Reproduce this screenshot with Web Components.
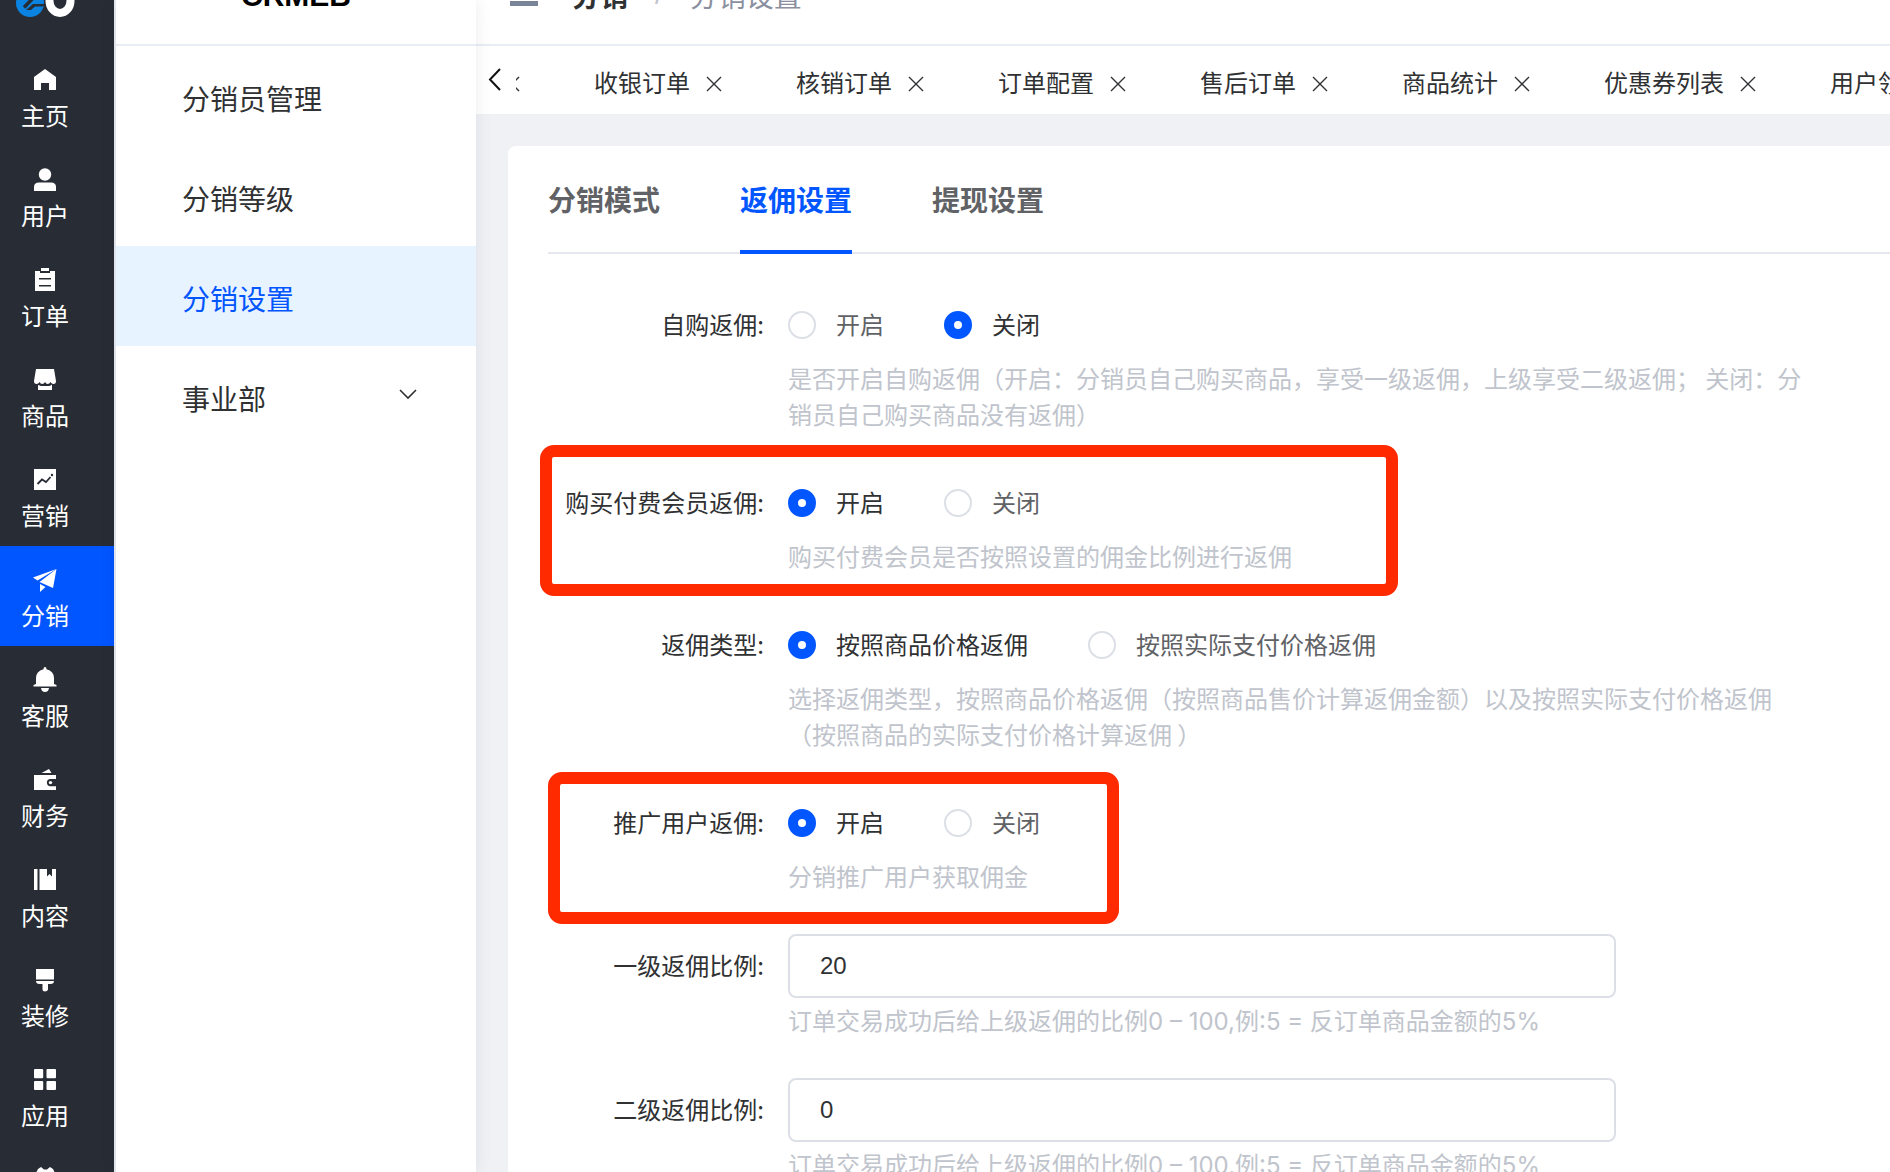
<!DOCTYPE html>
<html lang="zh-CN">
<head>
<meta charset="utf-8">
<title>分销设置</title>
<style>
  html, body { margin: 0; height: 100%; }
  body {
    overflow: hidden;
    font-family: "Noto Sans CJK SC", "Noto Sans", sans-serif;
    font-size: 24px;
    color: #303133;
    --blue: #0256ff;
    --line: #e8edf4;
    --hint: #c0c4cc;
  }
</style>
</head>
<body>
<crm-app></crm-app>

<script>
const define = (name, html, setup) => {
  const template = document.createElement('template');
  template.innerHTML = html;
  customElements.define(name, class extends HTMLElement {
    connectedCallback() {
      if (this.shadowRoot) return;
      const root = this.attachShadow({ mode: 'open' });
      root.append(template.content.cloneNode(true));
      if (setup) setup(this, root);
    }
  });
};

const ICONS = {
  home: '<path d="M12 2L23 10V23H16V16H8V23H1V10Z"/>',
  user: '<circle cx="12" cy="7.5" r="6.2"/><path d="M1 24V20Q1 15.500 6 15.500H18Q23 15.500 23 20V24Z"/>',
  order: '<path d="M8 1H16V4H8Z"/><path fill-rule="evenodd" d="M2 4H7V6H17V4H22V24H2ZM6 11V12.500H18V11ZM6 18V19.500H18V18Z"/>',
  goods: '<path d="M3 2H21L23 14Q23 17 20.500 17Q18.500 17 17.500 15Q16.500 17 14.700 17Q13 17 12 15Q11 17 9.300 17Q7.500 17 6.500 15Q5.500 17 3.500 17Q1 17 1 14Z"/><path d="M5 18Q7 18.500 8 19H16Q18 18.500 19 17.500V23H5Z"/>',
  market: '<path d="M1 2H23V23H1Z"/><path d="M4.500 17L9 12.500L13 15L17.500 10" fill="none" stroke="#282c34" stroke-width="1.800"/><circle cx="19" cy="8" r="1.200" fill="#282c34"/>',
  plane: '<path d="M23.500 2L0 10.500L4.500 13.500Z"/><path d="M23.500 2L6.500 15L20 21Z"/><path d="M7 17L12.500 20L7 25Z"/>',
  bell: '<path d="M12 0Q13.500 0 13.500 2.300Q21 4.500 21 11V17L23.500 18V19.500H.5V18L3 17V11Q3 4.500 10.500 2.300Q10.500 0 12 0Z"/><path d="M8 21H16Q15.500 25 12 25Q8.500 25 8 21Z"/>',
  wallet: '<path d="M8.500 6L16 2L18.500 6Z"/><path d="M1 8H23V12H17.500A3.600 3.600 0 0 0 17.500 19.200H23V23H1Z"/><circle cx="17.500" cy="15.600" r="1.700"/>',
  book: '<path d="M1 2H4.500V23H1Z"/><path d="M6.500 2H14V9.500L16.500 7L19 9.500V2H23V23H6.500Z"/>',
  brush: '<path d="M3 2H21V12.500H3Z"/><path d="M3 14H21Q21 17 17.500 17H15V22.500Q14.500 24.500 12 24.500Q9.500 24.500 9.500 22.500V17H6.500Q3 17 3 14Z"/>',
  apps: '<rect x="1" y="2" width="9.200" height="9.200" rx="1"/><rect x="13.500" y="2" width="9.500" height="9.200" rx="1"/><rect x="1" y="14" width="9.200" height="9" rx="1"/><rect x="13.500" y="14" width="9.500" height="9" rx="1"/>',
  gear: '<path d="M4 4L5 2L8 0L11 2.500H14L17 0L20 2L21 4L23 9V16L19 20V23H5V20L1 16V9Z"/>'
};

const CLOSE = '<svg width="16" height="16" viewBox="0 0 16 16" fill="none" stroke="#303133" stroke-width="1.400"><path d="M1 1L15 15M15 1L1 15"/></svg>';

define('rail-item', `
  <style>
    :host { display: block; }
    a {
      display: flex; flex-direction: column; align-items: center; gap: 8px;
      height: 100px; padding: 21px 24px 0 0; box-sizing: border-box;
      color: #fff; line-height: 32px; text-decoration: none;
    }
    :host([active]) a { background: var(--blue); }
    svg { flex: none; display: block; overflow: visible; fill: #fff; }
  </style>
  <a href="#"><svg width="24" height="24" viewBox="0 0 24 24"></svg><slot></slot></a>`,
  (el, root) => {
    root.querySelector('svg').innerHTML = ICONS[el.getAttribute('icon')];
    if (!el.textContent) root.querySelector('a').setAttribute('aria-label', '设置');
  });

define('nav-rail', `
  <style>
    :host { display: block; flex: none; width: 114px; background: #282c34; border-right: 2px solid var(--line); overflow: hidden; }
    .logo { display: flex; align-items: flex-end; height: 46px; overflow: hidden; }
    .logo svg { display: block; flex: none; }
  </style>
  <div class="logo">
    <svg width="90" height="100" viewBox="0 -54 90 100" fill="none">
      <ellipse cx="60" cy="1" rx="10.500" ry="12" stroke="#fff" stroke-width="8"/>
      <circle cx="30" cy="3" r="14" fill="#0a84e0"/>
      <path d="M24 7.500L36-5" stroke="#282c34" stroke-width="3.500"/>
      <path d="M26 10L33 4H46V5.500L42 6.500H35L31 10Z" fill="#282c34"/>
    </svg>
  </div>
  <nav>
    <rail-item icon="home">主页</rail-item>
    <rail-item icon="user">用户</rail-item>
    <rail-item icon="order">订单</rail-item>
    <rail-item icon="goods">商品</rail-item>
    <rail-item icon="market">营销</rail-item>
    <rail-item icon="plane" active>分销</rail-item>
    <rail-item icon="bell">客服</rail-item>
    <rail-item icon="wallet">财务</rail-item>
    <rail-item icon="book">内容</rail-item>
    <rail-item icon="brush">装修</rail-item>
    <rail-item icon="apps">应用</rail-item>
    <rail-item icon="gear"></rail-item>
  </nav>`);

define('menu-link', `
  <style>
    :host { display: block; }
    a {
      display: flex; align-items: center; justify-content: space-between;
      height: 100px; padding: 4px 58px 0 66px; box-sizing: border-box;
      font-size: 28px; color: #303133; text-decoration: none;
    }
    :host([active]) a { background: #e7f3ff; color: var(--blue); }
    svg { display: none; }
    :host([expandable]) svg { display: block; }
  </style>
  <a href="#"><slot></slot>
    <svg width="20" height="20" viewBox="0 0 20 20" fill="none" stroke="#303133" stroke-width="1.600"><path d="M2 2L10 10L18 2"/></svg>
  </a>`);

define('side-menu', `
  <style>
    :host { display: block; flex: none; width: 360px; background: #fff; position: relative; z-index: 1; box-shadow: 0 0 16px rgba(0, 21, 41, .08); }
    header { height: 46px; box-sizing: border-box; border-bottom: 2px solid var(--line); display: flex; align-items: flex-end; overflow: hidden; }
    strong { flex: 1; height: 96px; line-height: 96px; text-align: center; font-family: "Liberation Sans", sans-serif; font-size: 30px; color: #000; }
  </style>
  <header><strong>CRMEB</strong></header>
  <nav>
    <menu-link>分销员管理</menu-link>
    <menu-link>分销等级</menu-link>
    <menu-link active>分销设置</menu-link>
    <menu-link expandable>事业部</menu-link>
  </nav>`);

define('top-bar', `
  <style>
    :host { display: flex; align-items: flex-end; height: 46px; box-sizing: border-box; border-bottom: 2px solid var(--line); background: #fff; overflow: hidden; }
    .inner { display: flex; align-items: center; height: 98px; padding-left: 34px; gap: 34px; }
    button { border: 0; padding: 0; background: none; display: flex; }
    .crumbs { display: flex; gap: 27px; font-size: 28px; line-height: 98px; color: #8a90a0; }
    b { color: #303133; }
    i { font-family: "Liberation Sans", sans-serif; font-style: normal; color: #c0c4cc; }
  </style>
  <div class="inner">
    <button aria-label="菜单"><svg width="28" height="22" viewBox="0 0 28 22" fill="#7a8499"><path d="M0 0H28V4H0ZM0 9H28V13H0ZM0 17H28V22H0Z"/></svg></button>
    <div class="crumbs"><b>分销</b><i>/</i><span>分销设置</span></div>
  </div>`);

define('page-tab', `
  <style>
    :host { display: flex; align-items: center; gap: 16px; flex: none; padding-right: 74px; }
    a { color: #303133; text-decoration: none; white-space: nowrap; }
    :host(:empty) a { display: none; }
    button { border: 0; padding: 4px 0 0; background: none; display: flex; }
  </style>
  <a href="#"><slot></slot></a><button aria-label="关闭标签">${CLOSE}</button>`);

define('tab-strip', `
  <style>
    :host { display: flex; align-items: center; height: 68px; padding: 3px 0 0 12px; box-sizing: border-box; background: #fff; overflow: hidden; }
    .prev { flex: none; width: 28px; border: 0; padding: 0; background: none; display: flex; }
    .view { flex: 1; min-width: 0; overflow: hidden; display: flex; }
    .track { display: flex; margin-left: -12px; }
  </style>
  <button class="prev" aria-label="上一页"><svg width="14" height="30" viewBox="0 0 14 30" fill="none" stroke="#111" stroke-width="2"><path d="M12 2L2 12.500L12 23"/></svg></button>
  <div class="view"><div class="track">
    <page-tab></page-tab><page-tab>收银订单</page-tab><page-tab>核销订单</page-tab><page-tab>订单配置</page-tab><page-tab>售后订单</page-tab><page-tab>商品统计</page-tab><page-tab>优惠券列表</page-tab><page-tab>用户领</page-tab>
  </div></div>`);

define('card-tabs', `
  <style>
    :host { display: flex; gap: 80px; height: 108px; box-sizing: border-box; border-bottom: 2px solid #e4e7ed; }
    a { height: 108px; line-height: 106px; box-sizing: border-box; border-bottom: 4px solid transparent; font-size: 28px; font-weight: 700; color: #606266; text-decoration: none; }
    a.on { color: var(--blue); border-color: var(--blue); }
  </style>
  <a href="#">分销模式</a><a href="#" class="on">返佣设置</a><a href="#">提现设置</a>`);

define('radio-row', `
  <style>
    :host { display: flex; gap: 24px; position: relative; padding-bottom: 39px; }
    .name { flex: none; width: 216px; line-height: 62px; text-align: right; white-space: nowrap; }
    .body { flex: 1; max-width: 1024px; }
    .choices { display: flex; gap: 60px; height: 64px; }
    .choices label { display: flex; gap: 20px; line-height: 62px; color: #606266; }
    .choices label:has(:checked) { color: #303133; }
    input { appearance: none; margin: 18px 0 0; width: 28px; height: 28px; box-sizing: border-box; border: 2px solid #dcdfe6; border-radius: 50%; background: #fff; }
    input:checked { border: 10px solid var(--blue); }
    p { margin: 3px 0 0; line-height: 36px; color: var(--hint); }
    .frame { display: none; }
    :host([framed]) .frame {
      display: block; position: absolute; pointer-events: none; box-sizing: border-box;
      left: var(--frame-left); top: var(--frame-top); width: var(--frame-width); height: var(--frame-height);
      border: 12px solid #ff2a00; border-radius: 14px;
    }
  </style>
  <div class="name" id="name"></div>
  <div class="body">
    <div class="choices" role="radiogroup" aria-labelledby="name"></div>
    <p><slot></slot></p>
  </div>
  <div class="frame"></div>`,
  (el, root) => {
    root.querySelector('.name').textContent = el.getAttribute('label') + ':';
    const chosen = el.getAttribute('value');
    for (const text of el.getAttribute('options').split('|')) {
      const label = document.createElement('label');
      const input = document.createElement('input');
      input.type = 'radio';
      input.name = 'choice';
      input.checked = text === chosen;
      label.append(input, text);
      root.querySelector('.choices').append(label);
    }
  });

define('input-row', `
  <style>
    :host { display: flex; gap: 24px; padding-bottom: 38px; }
    label { flex: none; width: 216px; line-height: 62px; text-align: right; white-space: nowrap; }
    .body { flex: 1; max-width: 828px; }
    input {
      display: block; width: 100%; height: 64px; box-sizing: border-box; padding: 0 30px;
      border: 2px solid #dcdfe6; border-radius: 8px; background: #fff;
      font: 24px "Liberation Sans", sans-serif; color: #303133; outline: 0;
    }
    p { margin: 6px 0 0; line-height: 36px; color: var(--hint); font-family: Inter, "Noto Sans CJK SC", sans-serif; }
  </style>
  <label for="field"></label>
  <div class="body"><input id="field" type="text"><p><slot></slot></p></div>`,
  (el, root) => {
    root.querySelector('label').textContent = el.getAttribute('label') + ':';
    root.querySelector('input').value = el.getAttribute('value');
  });

define('settings-card', `
  <style>
    :host { display: block; background: #fff; border-radius: 8px 0 0 0; padding-left: 40px; }
    form { display: flex; flex-direction: column; padding-top: 39px; }
    .levels { padding-top: 1px; }
    .member { --frame-left: -8px; --frame-top: -26px; --frame-width: 858px; --frame-height: 151px; }
    .promote { --frame-left: 0px; --frame-top: -19px; --frame-width: 571px; --frame-height: 152px; }
  </style>
  <card-tabs></card-tabs>
  <form>
    <radio-row label="自购返佣" options="开启|关闭" value="关闭">是否开启自购返佣（开启：分销员自己购买商品，享受一级返佣，上级享受二级返佣； 关闭：分销员自己购买商品没有返佣）</radio-row>
    <radio-row class="member" framed label="购买付费会员返佣" options="开启|关闭" value="开启">购买付费会员是否按照设置的佣金比例进行返佣</radio-row>
    <radio-row label="返佣类型" options="按照商品价格返佣|按照实际支付价格返佣" value="按照商品价格返佣">选择返佣类型，按照商品价格返佣（按照商品售价计算返佣金额）以及按照实际支付价格返佣（按照商品的实际支付价格计算返佣 ）</radio-row>
    <radio-row class="promote" framed label="推广用户返佣" options="开启|关闭" value="开启">分销推广用户获取佣金</radio-row>
    <div class="levels">
      <input-row label="一级返佣比例" value="20">订单交易成功后给上级返佣的比例0 – 100,例:5 = 反订单商品金额的5%</input-row>
      <input-row label="二级返佣比例" value="0">订单交易成功后给上级返佣的比例0 – 100,例:5 = 反订单商品金额的5%</input-row>
    </div>
  </form>`);

define('crm-app', `
  <style>
    :host { display: flex; height: 100vh; overflow: hidden; background: #f0f1f5; }
    main { flex: 1; min-width: 0; }
    .content { padding: 32px 0 0 32px; }
  </style>
  <nav-rail></nav-rail>
  <side-menu></side-menu>
  <main>
    <top-bar></top-bar>
    <tab-strip></tab-strip>
    <div class="content"><settings-card></settings-card></div>
  </main>`);
</script>
</body>
</html>
